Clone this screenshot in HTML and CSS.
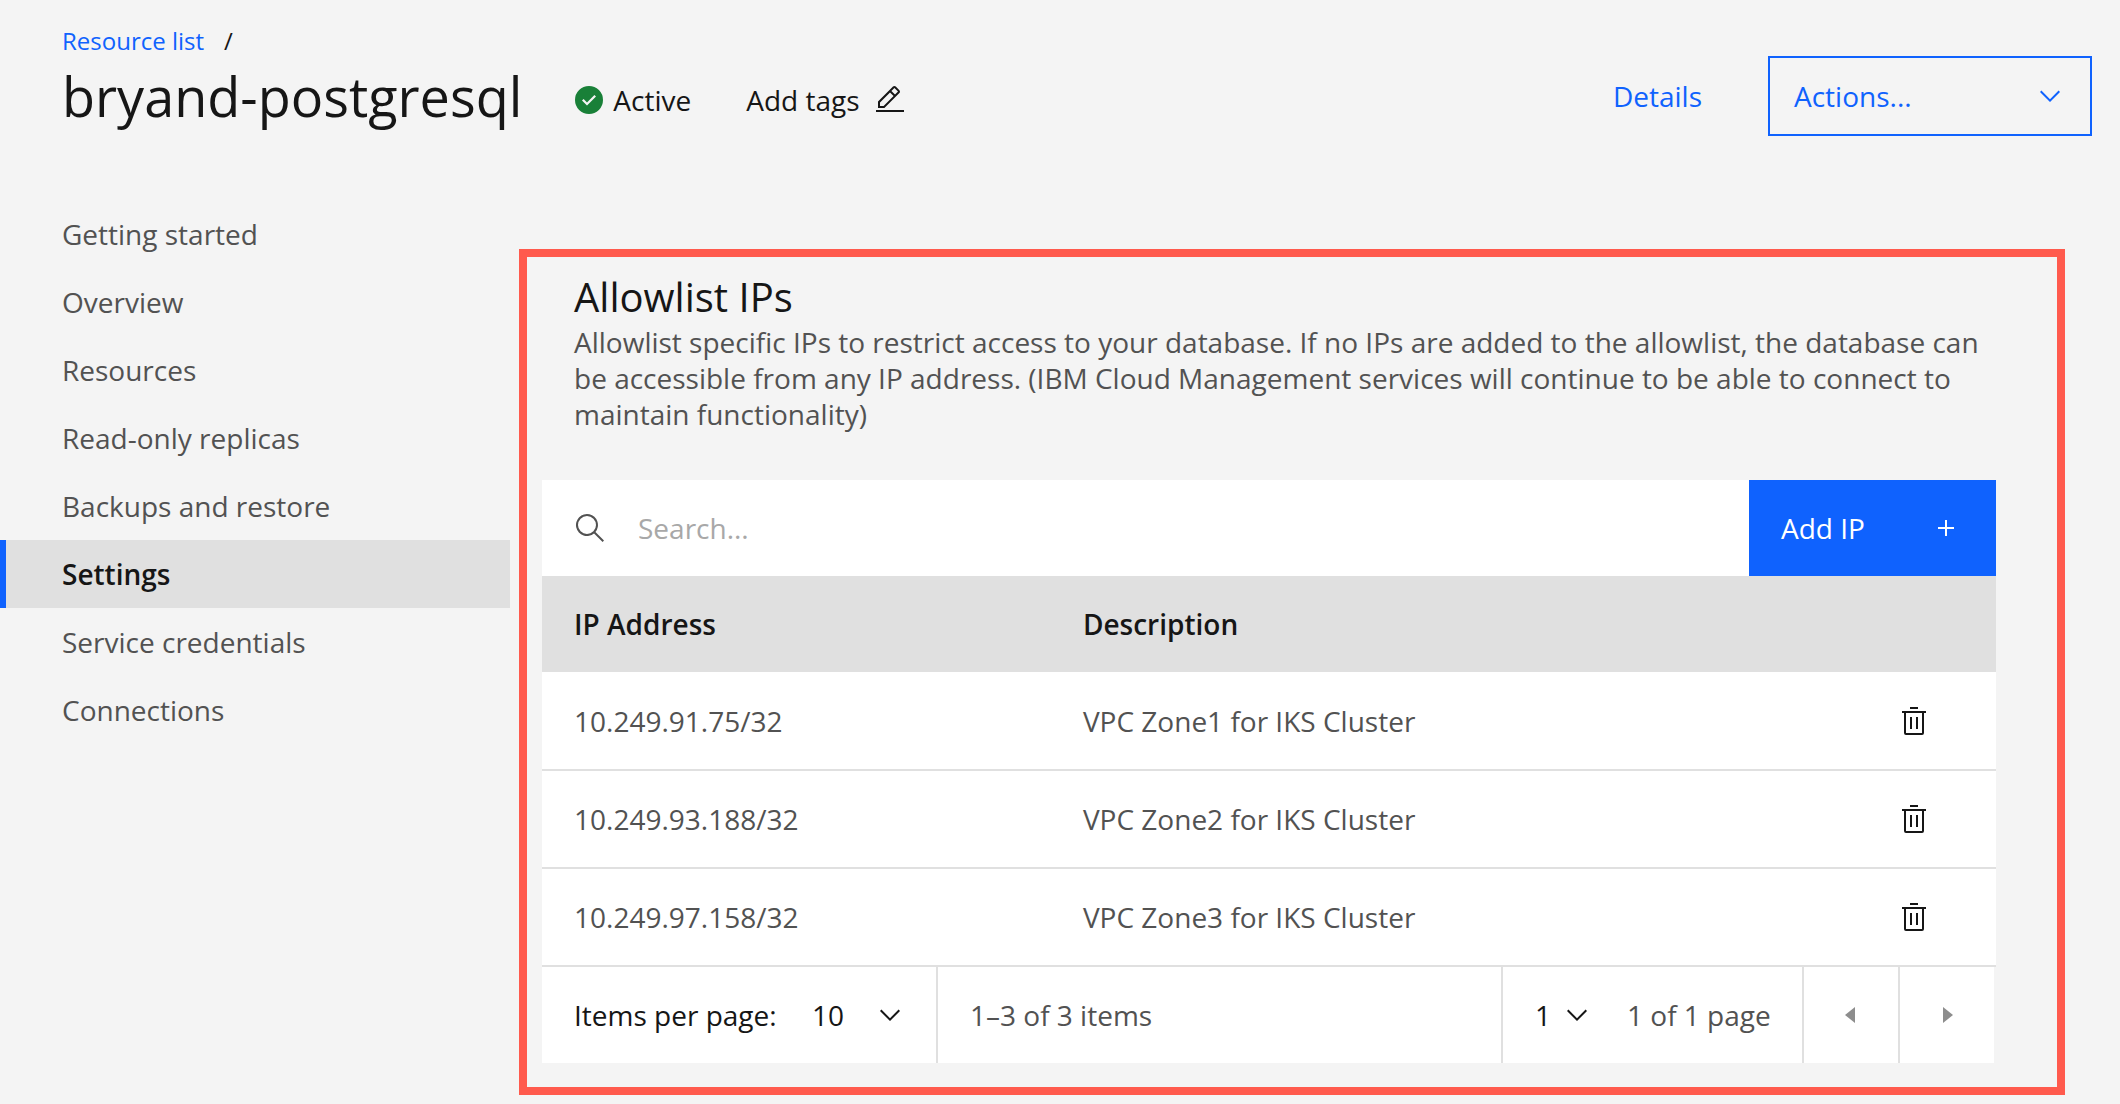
FILE: index.html
```
<!DOCTYPE html>
<html lang="en">
<head>
<meta charset="utf-8">
<title>bryand-postgresql</title>
<link rel="stylesheet" href="styles.css">
</head>
<body>
<svg class="sprite" aria-hidden="true">
  <symbol id="check" viewBox="0 0 32 32"><path d="M16 2a14 14 0 1 0 14 14A14 14 0 0 0 16 2Zm-2 19.6-5-5L10.6 15 14 18.4 21.4 11 23 12.6Z"/></symbol>
  <symbol id="edit" viewBox="0 0 32 32"><path d="M2 26H30V28H2zM25.4 9c.8-.8.8-2 0-2.8l-3.6-3.6c-.8-.8-2-.8-2.8 0l-15 15V24h6.4l15-15zM20.4 4 24 7.6l-3 3L17.4 7l3-3zM6 22v-3.6l10-10 3.6 3.6-10 10H6z"/></symbol>
  <symbol id="chevron" viewBox="0 0 16 16"><path d="M8 11 3 6l.7-.7L8 9.6l4.3-4.3L13 6z"/></symbol>
  <symbol id="search" viewBox="0 0 32 32"><path d="m30 28.6-8.550-8.570a11 11 0 1 0-1.410 1.420L28.600 30ZM4 13a9 9 0 1 1 9 9 9 9 0 0 1-9-9Z"/></symbol>
  <symbol id="add" viewBox="0 0 32 32"><path d="M17 15V8h-2v7H8v2h7v7h2v-7h7v-2z"/></symbol>
  <symbol id="trash" viewBox="0 0 32 32"><path d="M12 12h2v12h-2zM18 12h2v12h-2zM4 6v2h2v20a2 2 0 0 0 2 2h16a2 2 0 0 0 2-2V8h2V6ZM8 28V8h16v20ZM12 2h8v2h-8z"/></symbol>
  <symbol id="caret-left" viewBox="0 0 32 32"><path d="M20 24 10 16 20 8z"/></symbol>
  <symbol id="caret-right" viewBox="0 0 32 32"><path d="m12 8 10 8-10 8z"/></symbol>
</svg>

<header class="page-header">
  <div class="heading">
    <nav class="breadcrumb" aria-label="Breadcrumb"><a href="#">Resource list</a><span>/</span></nav>
    <div class="title-row">
      <h1>bryand-postgresql</h1>
      <span class="status"><svg class="icon icon-success"><use href="#check"/></svg>Active</span>
      <button class="tags" type="button">Add tags<svg class="icon"><use href="#edit"/></svg></button>
    </div>
  </div>
  <div class="header-actions">
    <a href="#">Details</a>
    <button class="actions" type="button">Actions...<svg class="icon"><use href="#chevron"/></svg></button>
  </div>
</header>

<div class="layout">
  <nav class="side-nav" aria-label="Resource">
    <a href="#">Getting started</a>
    <a href="#">Overview</a>
    <a href="#">Resources</a>
    <a href="#">Read-only replicas</a>
    <a href="#">Backups and restore</a>
    <a class="current" href="#" aria-current="page">Settings</a>
    <a href="#">Service credentials</a>
    <a href="#">Connections</a>
  </nav>

  <main class="panel">
    <div class="intro">
      <h2>Allowlist IPs</h2>
      <p>Allowlist specific IPs to restrict access to your database. If no IPs are added to the allowlist, the database can be accessible from any IP address. (IBM Cloud Management services will continue to be able to connect to maintain functionality)</p>
    </div>
    <div class="toolbar">
      <label class="search"><svg class="icon"><use href="#search"/></svg><input type="search" placeholder="Search..." aria-label="Search"></label>
      <button class="add" type="button">Add IP<svg class="icon"><use href="#add"/></svg></button>
    </div>
    <table>
      <colgroup><col class="col-ip"><col><col class="col-delete"></colgroup>
      <thead><tr><th scope="col">IP Address</th><th scope="col">Description</th><td></td></tr></thead>
      <tbody>
        <tr><td>10.249.91.75/32</td><td>VPC Zone1 for IKS Cluster</td><td><button class="delete" type="button" aria-label="Delete"><svg class="icon"><use href="#trash"/></svg></button></td></tr>
        <tr><td>10.249.93.188/32</td><td>VPC Zone2 for IKS Cluster</td><td><button class="delete" type="button" aria-label="Delete"><svg class="icon"><use href="#trash"/></svg></button></td></tr>
        <tr><td>10.249.97.158/32</td><td>VPC Zone3 for IKS Cluster</td><td><button class="delete" type="button" aria-label="Delete"><svg class="icon"><use href="#trash"/></svg></button></td></tr>
      </tbody>
    </table>
    <div class="pagination">
      <div class="page-size">
        <label for="size">Items per page:</label>
        <span class="select select-size"><select id="size"><option>10</option></select><svg class="icon"><use href="#chevron"/></svg></span>
      </div>
      <span class="range">1–3 of 3 items</span>
      <div class="page-number">
        <span class="select select-page"><select id="page" aria-label="Page"><option>1</option></select><svg class="icon"><use href="#chevron"/></svg></span>
        <label for="page">1 of 1 page</label>
      </div>
      <button class="step" type="button" aria-label="Previous page" disabled><svg class="icon"><use href="#caret-left"/></svg></button>
      <button class="step" type="button" aria-label="Next page" disabled><svg class="icon"><use href="#caret-right"/></svg></button>
    </div>
  </main>
</div>
</body>
</html>
```
FILE: styles.css
```
:root {
  --blue: #0f62fe;
  --ink: #161616;
  --muted: #525252;
  --line: #e0e0e0;
}

* { box-sizing: border-box; }

body {
  margin: 0;
  background: #f4f4f4;
  color: var(--ink);
  font: 28px/36px "Open Sans", "Noto Sans", sans-serif;
}

h1, h2, p { margin: 0; font-weight: 400; }

a { color: var(--blue); text-decoration: none; }

button, input, select {
  margin: 0;
  padding: 0;
  border: 0;
  border-radius: 0;
  background: none;
  color: inherit;
  font: inherit;
}

button, select { cursor: pointer; }

.sprite { display: none; }

.icon {
  display: block;
  flex: none;
  width: 32px;
  height: 32px;
  fill: currentColor;
}

.icon-success { fill: #198038; }

/* Page header */

.page-header {
  display: flex;
  align-items: flex-end;
  justify-content: space-between;
  padding: 24px 28px 0 62px;
}

.breadcrumb {
  display: flex;
  gap: 20px;
  margin-bottom: 6px;
  font-size: 24px;
  line-height: 34px;
}

.title-row {
  display: flex;
  align-items: center;
  height: 72px;
}

h1 {
  padding-bottom: 8px;
  font-size: 54px;
  line-height: 64px;
}

.status {
  display: flex;
  align-items: center;
  gap: 8px;
  margin-left: 51px;
}

.tags {
  display: flex;
  align-items: center;
  gap: 14px;
  margin-left: 55px;
}

.header-actions {
  display: flex;
  align-items: center;
  gap: 66px;
}

.actions {
  display: flex;
  align-items: center;
  justify-content: space-between;
  width: 324px;
  height: 80px;
  padding: 0 24px;
  border: 2px solid var(--blue);
  color: var(--blue);
}

/* Body */

.layout {
  display: flex;
  align-items: flex-start;
  gap: 9px;
  padding: 64px 55px 9px 0;
}

.side-nav {
  flex: none;
  width: 510px;
}

.side-nav a {
  display: block;
  padding: 16px 16px 16px 56px;
  border-left: 6px solid transparent;
  color: var(--muted);
}

.side-nav .current {
  border-color: var(--blue);
  background: var(--line);
  color: var(--ink);
  font-weight: 600;
}

.panel {
  flex: 1;
  min-width: 0;
  margin-top: 49px;
  padding: 15px 61px 24px 15px;
  border: 8px solid #ff5a4d;
}

.intro {
  padding-left: 32px;
  margin-bottom: 48px;
}

h2 {
  margin-bottom: 2px;
  font-size: 40px;
  line-height: 50px;
}

.intro p { color: var(--muted); }

.toolbar {
  display: flex;
  height: 96px;
}

.search {
  display: flex;
  flex: 1;
  align-items: center;
  gap: 32px;
  padding-left: 32px;
  background: #fff;
  color: var(--muted);
}

.search input {
  flex: 1;
  min-width: 0;
  outline: 0;
  appearance: none;
}

.search input::placeholder { color: #a8a8a8; }

.add {
  display: flex;
  align-items: center;
  justify-content: space-between;
  width: 247px;
  padding: 0 34px 0 32px;
  background: var(--blue);
  color: #fff;
}

table {
  width: 100%;
  border-collapse: separate;
  border-spacing: 0;
  table-layout: fixed;
}

.col-ip { width: 35%; }
.col-delete { width: 130px; }

th, td {
  padding: 0 32px;
  text-align: left;
}

thead tr {
  height: 96px;
  background: var(--line);
}

th { font-weight: 600; }

tbody td {
  height: 98px;
  border-bottom: 2px solid var(--line);
  background: #fff;
  color: var(--muted);
}

tbody tr:first-child td { height: 99px; }

.delete { display: block; color: var(--ink); }

/* Pagination */

.pagination {
  display: flex;
  height: 96px;
  margin-right: 2px;
  background: #fff;
}

.page-size {
  display: flex;
  align-items: center;
  justify-content: space-between;
  width: 396px;
  padding: 0 30px 0 32px;
  border-right: 2px solid var(--line);
}

.select { display: grid; align-items: center; }

.select > * { grid-area: 1 / 1; }

.select select { width: 100%; appearance: none; }

.select .icon { justify-self: end; pointer-events: none; }

.select-size { width: 94px; }
.select-page { width: 58px; }

.range {
  flex: 1;
  align-self: center;
  padding-left: 32px;
  color: var(--muted);
}

.page-number {
  display: flex;
  align-items: center;
  gap: 34px;
  width: 301px;
  padding-left: 32px;
  border-left: 2px solid var(--line);
}

.page-number label { color: var(--muted); }

.step {
  display: flex;
  align-items: center;
  justify-content: center;
  width: 96px;
  border-left: 2px solid var(--line);
  color: #8d8d8d;
}
```
